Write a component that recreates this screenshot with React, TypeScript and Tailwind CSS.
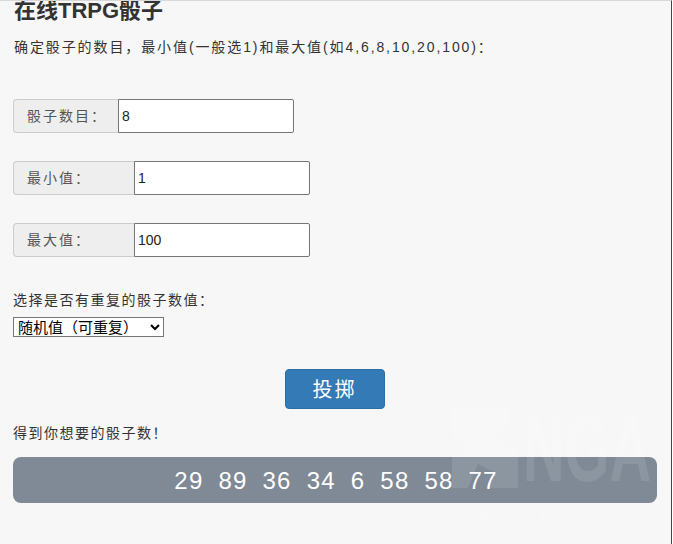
const font = { fontFamily: '"Liberation Sans", "Noto Sans CJK SC", sans-serif' };

function InputRow({ label, value, labelWidth }: { label: string; value: string; labelWidth: string }) {
    return (
        <div className="flex h-[34px] text-[14px]">
            <span className={`flex items-center pl-[13px] tracking-[2px] whitespace-nowrap text-[#555] bg-[#eeeeee] border border-[#cccccc] border-r-0 rounded-l-[4px] ${labelWidth}`}>
                {label}
            </span>
            <input
                readOnly
                value={value}
                className="w-[176px] h-[34px] px-[3px] text-[14px] text-[#222] bg-white border border-[#767676] rounded-r-[2px] outline-none"
            />
        </div>
    );
}

export default function App() {
    const results = [29, 89, 36, 34, 6, 58, 58, 77];

    return (
        <div className="relative w-[673px] h-[544px] overflow-hidden bg-white" style={font}>
            <div className="w-[672px] h-[544px] overflow-hidden bg-[#f7f7f7] border-t border-t-[#d8d8d8] border-r border-r-[#444444] pl-[13px] pr-[14px]">
                <h1 className="mt-[-5px] ml-[1px] h-[30px] text-[22px] leading-[30px] font-bold text-[#333]">在线TRPG骰子</h1>
                <p className="mt-[11px] ml-[1px] h-[20px] text-[14px] leading-[20px] tracking-[1.9px] text-[#333] whitespace-nowrap">
                    确定骰子的数目，最小值(一般选1)和最大值(如4,6,8,10,20,100)：
                </p>

                <div className="mt-[42px] flex flex-col gap-[28px]">
                    <InputRow label="骰子数目：" value="8" labelWidth="w-[105px]" />
                    <InputRow label="最小值：" value="1" labelWidth="w-[121px]" />
                    <InputRow label="最大值：" value="100" labelWidth="w-[121px]" />
                </div>

                <p className="mt-[33px] h-[20px] text-[14px] leading-[20px] tracking-[1.5px] text-[#333]">选择是否有重复的骰子数值：</p>
                <select className="block mt-[7px] w-[151px] h-[20px] text-[15px] leading-[18px] text-black bg-white border border-[#767676] rounded-none">
                    <option>随机值（可重复）</option>
                </select>

                <div className="mt-[32px] flex justify-center pr-[1px]">
                    <button className="w-[100px] h-[40px] pt-[2px] text-[20px] tracking-[2px] text-white bg-[#337ab7] border border-[#2e6da4] rounded-[4px]">
                        投掷
                    </button>
                </div>

                <p className="mt-[14px] h-[20px] text-[14px] leading-[20px] tracking-[1.5px] text-[#333]">得到你想要的骰子数！</p>

                <div className="mt-[14px] w-[644px] h-[46px] flex items-center justify-center gap-[15px] pl-[2px] pt-[2px] bg-[#7f8a96] rounded-[8px] text-[24px] tracking-[1.2px] font-medium text-white">
                    {results.map((n, i) => (
                        <span key={i}>{n}</span>
                    ))}
                </div>
            </div>

            {/* NGA watermark over the page */}
            <div className="absolute left-[452px] top-[408px] w-[200px] h-[115px] pointer-events-none">
                <div className="flex items-end h-[80px]">
                    <svg width="71" height="80" viewBox="0 0 71 80" className="shrink-0 fill-white/10">
                        <path d="M0 0h58v18L42 32l24 10v38H34l8-16-16-8-10 24H0V50l18-12L0 30z" />
                    </svg>
                    <span
                        className="block origin-left scale-x-[0.6] text-[96px] leading-[80px] font-bold text-white/10"
                        style={{ fontFamily: '"Liberation Sans", sans-serif' }}
                    >
                        NGA
                    </span>
                </div>
                <span className="block mt-[19px] ml-[10px] text-[13px] leading-[16px] tracking-[8px] text-white/30 whitespace-nowrap">BBS NGA CN</span>
            </div>
        </div>
    );
}
